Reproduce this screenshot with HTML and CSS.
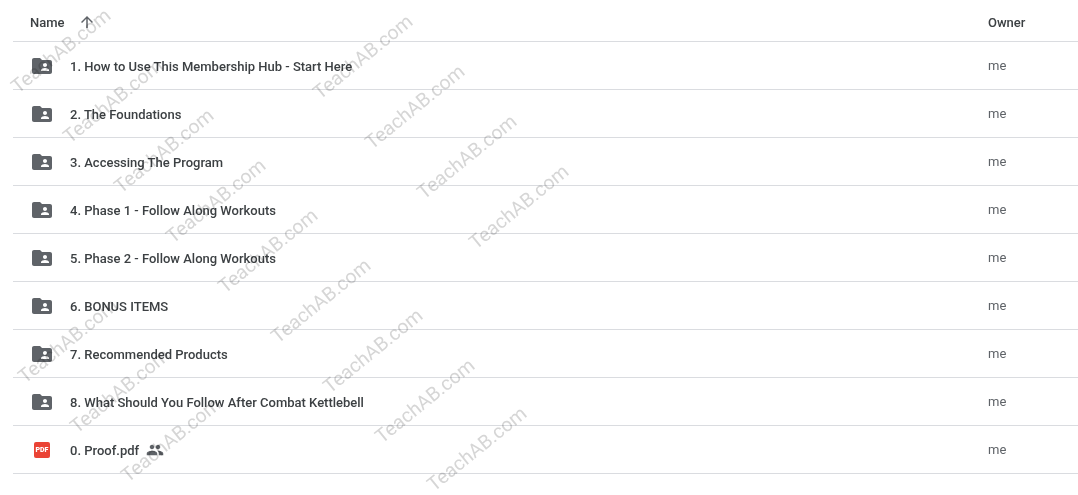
FILE: index.html
```html
<!DOCTYPE html>
<html lang="en">
<head>
    <meta charset="UTF-8">
    <meta name="viewport" content="width=device-width, initial-scale=1.0">
    <title>Drive folder</title>
    <link rel="stylesheet" href="styles.css">
</head>
<body>
    <svg class="icon-defs" width="0" height="0">
        <symbol id="folder-shared" viewBox="0 0 24 24">
            <path d="M10 4H4c-1.1 0-2 .9-2 2v12c0 1.1.9 2 2 2h16c1.1 0 2-.9 2-2V8c0-1.1-.9-2-2-2h-8l-2-2zm5 5c1.1 0 2 .9 2 2s-.9 2-2 2-2-.9-2-2 .9-2 2-2zm4 8h-8v-1c0-1.33 2.67-2 4-2s4 .67 4 2v1z"/>
        </symbol>
    </svg>

    <div class="file-list">
        <div class="list-header">
            <div class="col-name">
                <span class="name-label">Name</span>
                <svg class="sort-arrow" viewBox="0 0 24 24"><path d="M4 12l1.41 1.41L11 7.83V20h2V7.83l5.58 5.59L20 12l-8-8-8 8z"/></svg>
            </div>
            <div class="col-owner">Owner</div>
        </div>

        <div class="row">
            <div class="col-name"><svg class="folder"><use href="#folder-shared"/></svg><span class="file-name">1. How to Use This Membership Hub - Start Here</span></div>
            <div class="col-owner">me</div>
        </div>
        <div class="row">
            <div class="col-name"><svg class="folder"><use href="#folder-shared"/></svg><span class="file-name">2. The Foundations</span></div>
            <div class="col-owner">me</div>
        </div>
        <div class="row">
            <div class="col-name"><svg class="folder"><use href="#folder-shared"/></svg><span class="file-name">3. Accessing The Program</span></div>
            <div class="col-owner">me</div>
        </div>
        <div class="row">
            <div class="col-name"><svg class="folder"><use href="#folder-shared"/></svg><span class="file-name">4. Phase 1 - Follow Along Workouts</span></div>
            <div class="col-owner">me</div>
        </div>
        <div class="row">
            <div class="col-name"><svg class="folder"><use href="#folder-shared"/></svg><span class="file-name">5. Phase 2 - Follow Along Workouts</span></div>
            <div class="col-owner">me</div>
        </div>
        <div class="row">
            <div class="col-name"><svg class="folder"><use href="#folder-shared"/></svg><span class="file-name">6. BONUS ITEMS</span></div>
            <div class="col-owner">me</div>
        </div>
        <div class="row">
            <div class="col-name"><svg class="folder"><use href="#folder-shared"/></svg><span class="file-name">7. Recommended Products</span></div>
            <div class="col-owner">me</div>
        </div>
        <div class="row">
            <div class="col-name"><svg class="folder"><use href="#folder-shared"/></svg><span class="file-name">8. What Should You Follow After Combat Kettlebell</span></div>
            <div class="col-owner">me</div>
        </div>
        <div class="row">
            <div class="col-name">
                <span class="pdf-icon">PDF</span><span class="file-name">0. Proof.pdf</span>
                <svg class="shared" viewBox="0 0 24 24"><path d="M16 11c1.66 0 2.99-1.34 2.99-3S17.66 5 16 5c-1.66 0-3 1.34-3 3s1.34 3 3 3zm-8 0c1.66 0 2.99-1.34 2.99-3S9.66 5 8 5C6.34 5 5 6.34 5 8s1.34 3 3 3zm0 2c-2.33 0-7 1.17-7 3.5V19h14v-2.5c0-2.33-4.67-3.5-7-3.5zm8 0c-.29 0-.62.02-.97.05 1.16.84 1.97 1.97 1.97 3.45V19h6v-2.5c0-2.33-4.67-3.5-7-3.5z"/></svg>
            </div>
            <div class="col-owner">me</div>
        </div>
    </div>

    <!-- Watermark stamped over the list -->
    <div class="watermarks">
        <span class="wm wm-1">TeachAB.com</span>
        <span class="wm wm-2">TeachAB.com</span>
        <span class="wm wm-3">TeachAB.com</span>
        <span class="wm wm-4">TeachAB.com</span>
        <span class="wm wm-5">TeachAB.com</span>
        <span class="wm wm-6">TeachAB.com</span>
        <span class="wm wm-7">TeachAB.com</span>
        <span class="wm wm-8">TeachAB.com</span>
        <span class="wm wm-9">TeachAB.com</span>
        <span class="wm wm-10">TeachAB.com</span>
        <span class="wm wm-11">TeachAB.com</span>
        <span class="wm wm-12">TeachAB.com</span>
        <span class="wm wm-13">TeachAB.com</span>
        <span class="wm wm-14">TeachAB.com</span>
        <span class="wm wm-15">TeachAB.com</span>
        <span class="wm wm-16">TeachAB.com</span>
    </div>
</body>
</html>
```

FILE: styles.css
```css
html, body {
    height: 100%;
}

body {
    font-family: Roboto, Arial, sans-serif;
    margin: 0;
    background-color: #fff;
    color: #3c4043;
    font-size: 13px;
    overflow: hidden;
    position: relative;
}

.icon-defs {
    position: absolute;
}

.file-list {
    margin-left: 13px;
}

.list-header {
    display: flex;
    align-items: center;
    box-sizing: border-box;
    height: 42px;
    padding-top: 3px;
    border-bottom: 1px solid #dadce0;
    font-weight: 500;
}

.list-header .col-name {
    padding-left: 17px;
}

.list-header .col-owner {
    color: #3c4043;
    font-weight: 500;
}

.name-label {
    margin-right: 13px;
}

.sort-arrow {
    width: 18px;
    height: 18px;
    fill: #5f6368;
}

.row {
    display: flex;
    align-items: center;
    height: 47px;
    border-bottom: 1px solid #dadce0;
    font-weight: 500;
}

.col-name {
    flex: 1;
    display: flex;
    align-items: center;
}

.file-name {
    padding-top: 2px;
}

.col-owner {
    width: 90px;
    color: #5f6368;
    font-weight: 400;
}

.folder {
    width: 24px;
    height: 24px;
    margin: 0 16px 0 17px;
    fill: #5f6368;
}

.pdf-icon {
    width: 16px;
    height: 16px;
    margin: 0 20px 0 21px;
    background-color: #ea4335;
    border-radius: 2px;
    color: #fff;
    font-size: 7px;
    font-weight: 900;
    line-height: 16px;
    text-align: center;
}

.shared {
    width: 18px;
    height: 18px;
    margin-left: 7px;
    fill: #5f6368;
}

.watermarks {
    position: absolute;
    top: 0;
    left: 0;
    right: 0;
    bottom: 0;
    overflow: hidden;
    pointer-events: none;
    mix-blend-mode: multiply;
}

.wm {
    position: absolute;
    font-size: 19.5px;
    line-height: 1;
    white-space: nowrap;
    color: #d6d6d6;
    transform: translate(-50%, -50%) rotate(-39deg);
}

.wm-1 { left: 61px; top: 51px; }
.wm-2 { left: 113px; top: 101px; }
.wm-3 { left: 164px; top: 151px; }
.wm-4 { left: 216px; top: 201px; }
.wm-5 { left: 268px; top: 251px; }

.wm-6 { left: 363px; top: 57px; }
.wm-7 { left: 415px; top: 107px; }
.wm-8 { left: 467px; top: 157px; }
.wm-9 { left: 519px; top: 207px; }

.wm-10 { left: 68px; top: 341px; }
.wm-11 { left: 120px; top: 391px; }
.wm-12 { left: 171px; top: 440px; }

.wm-13 { left: 321px; top: 301px; }
.wm-14 { left: 373px; top: 351px; }
.wm-15 { left: 425px; top: 401px; }
.wm-16 { left: 477px; top: 449px; }
```
